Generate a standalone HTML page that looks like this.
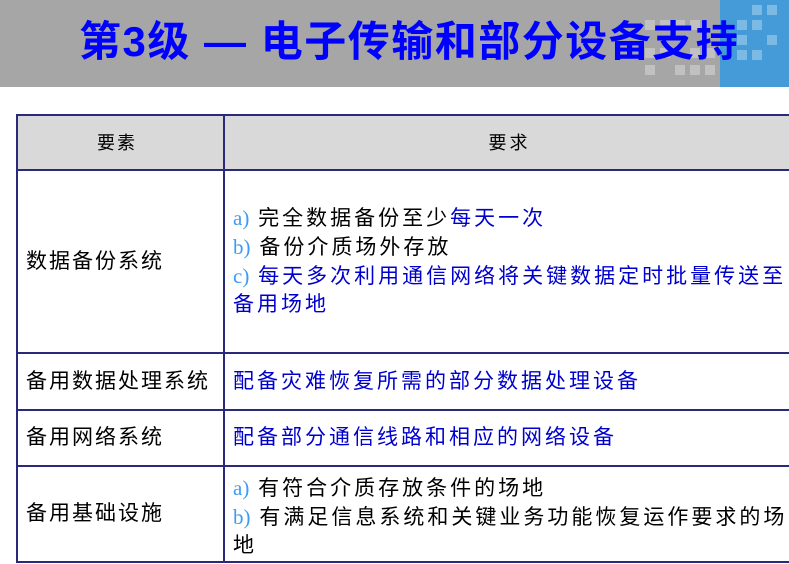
<!DOCTYPE html>
<html><head><meta charset="utf-8"><style>
body{margin:0;width:789px;height:564px;overflow:hidden;background:#fff;font-family:"Liberation Sans","Noto Sans CJK SC",sans-serif;position:relative}
.hdr{position:absolute;left:0;top:0;width:789px;height:87px;background:#a6a6a6}
.bp{position:absolute;left:720px;top:0;width:69px;height:87px;background:#449bd8}
.sq{position:absolute;width:10px;height:10px;background:rgba(255,255,255,.3)}
.title{position:absolute;left:79px;top:8px;font-size:42px;font-weight:bold;color:#0000ff;white-space:nowrap;letter-spacing:1.5px}
table{position:absolute;left:16px;top:114px;border-collapse:collapse;width:780px}
td{border:2px solid #2a2a7a;font-size:21px;color:#000;padding:0 0 0 8px;letter-spacing:2px;line-height:28px;vertical-align:middle}
td+td{letter-spacing:3px}
.h td{background:#d9d9d9;text-align:center;font-size:18px;padding:0;height:53px}
.b{color:#0000cc}.l{color:#3d9bf5;font-family:"Liberation Serif",serif;letter-spacing:0}
</style></head><body>
<div class="hdr"></div><div class="bp"></div>
<div class="sq" style="left:645px;top:20px"></div><div class="sq" style="left:660px;top:20px"></div><div class="sq" style="left:675px;top:20px"></div><div class="sq" style="left:690px;top:20px"></div>
<div class="sq" style="left:645px;top:48px"></div><div class="sq" style="left:660px;top:48px"></div><div class="sq" style="left:690px;top:48px"></div><div class="sq" style="left:705px;top:48px"></div>
<div class="sq" style="left:645px;top:65px"></div><div class="sq" style="left:675px;top:65px"></div><div class="sq" style="left:690px;top:65px"></div><div class="sq" style="left:705px;top:65px"></div>
<div class="sq" style="left:752px;top:5px"></div><div class="sq" style="left:767px;top:5px"></div><div class="sq" style="left:737px;top:20px"></div><div class="sq" style="left:752px;top:20px"></div><div class="sq" style="left:737px;top:35px"></div><div class="sq" style="left:767px;top:35px"></div><div class="sq" style="left:737px;top:50px"></div><div class="sq" style="left:752px;top:50px"></div>
<div class="title">第3级 — 电子传输和部分设备支持</div>
<table>
<tr class="h"><td style="width:198px;padding:0 7px 0 0">要素</td><td>要求</td></tr>
<tr><td style="height:181px">数据备份系统</td><td><span class="l">a)</span> 完全数据备份至少<span class="b">每天一次</span><br><span class="l">b)</span> 备份介质场外存放<br><span class="b"><span class="l">c)</span> 每天多次利用通信网络将关键数据定时批量传送至备用场地</span></td></tr>
<tr><td style="height:55px">备用数据处理系统</td><td class="b">配备灾难恢复所需的部分数据处理设备</td></tr>
<tr><td style="height:54px">备用网络系统</td><td class="b">配备部分通信线路和相应的网络设备</td></tr>
<tr><td style="height:94px">备用基础设施</td><td style="padding-top:6px"><span class="l">a)</span> 有符合介质存放条件的场地<br><span class="l">b)</span> 有满足信息系统和关键业务功能恢复运作要求的场地</td></tr>
</table>
</body></html>
